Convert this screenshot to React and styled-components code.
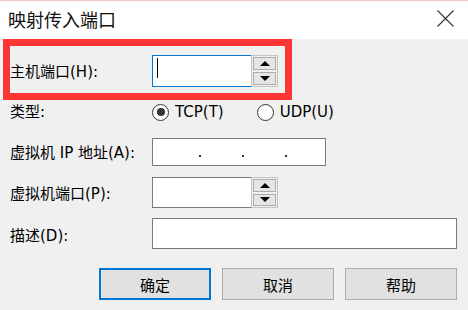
import React from 'react';
import styled, { createGlobalStyle } from 'styled-components';

const GlobalStyle = createGlobalStyle`
  html, body {
    margin: 0;
    padding: 0;
    background: #f0f0f0;
  }
  body {
    font-family: "DejaVu Sans", "Noto Sans CJK SC", sans-serif;
    color: #000;
  }
`;

const Window = styled.div`
  width: 468px;
  height: 310px;
  background: #f0f0f0;
  overflow: hidden;
  display: flex;
  flex-direction: column;
`;

const TitleBar = styled.div`
  height: 39px;
  box-sizing: border-box;
  background: #fff;
  border-top: 1px solid #f4c6c6;
  display: flex;
  align-items: center;
  justify-content: space-between;
  padding: 0 14px 2px 8px;
  font-size: 18px;
  color: #111;
`;

const CloseIcon = styled.svg`
  width: 17px;
  height: 17px;
  margin-top: -1px;
`;

// red annotation frame around the first row
const Highlight = styled.div`
  width: 289px;
  height: 61px;
  box-sizing: border-box;
  margin-left: 3px;
  border: 7px solid #fc3535;
  padding-top: 9px;
`;

const Row = styled.div`
  display: grid;
  grid-template-columns: ${p => p.$labelWidth || 142}px auto;
  align-items: center;
  padding-left: ${p => p.$indent ?? 10}px;
  margin-top: ${p => p.$top || 0}px;
  height: ${p => p.$height || 31}px;
`;

const Label = styled.span`
  font-size: 15px;
  line-height: 1;
  padding-top: ${p => p.$drop || 3}px;
  white-space: nowrap;
`;

const Spin = styled.div`
  display: flex;
  height: ${p => p.$h}px;
`;

const SpinField = styled.div`
  width: 99px;
  height: 100%;
  box-sizing: border-box;
  background: #fff;
  border: 1px solid ${p => (p.$focus ? '#0078d7' : '#7a7a7a')};
  border-right: none;
  position: relative;
`;

const Caret = styled.span`
  position: absolute;
  left: 4px;
  top: 2px;
  width: 1px;
  height: 20px;
  background: #000;
`;

const SpinButtons = styled.div`
  width: 27px;
  height: 100%;
  box-sizing: border-box;
  border: 1px solid #c4c4c4;
  background: #f0f0f0;
  display: flex;
  flex-direction: column;
  gap: 2px;
  padding: 1px;
`;

const SpinBtn = styled.div`
  flex: 1;
  background: #e5e5e5;
  border: 1px solid #adadad;
  display: flex;
  align-items: center;
  justify-content: center;
`;

const Triangle = styled.span`
  width: 0;
  height: 0;
  border-left: 5px solid transparent;
  border-right: 5px solid transparent;
  ${p => (p.$down ? 'border-top: 5px solid #000;' : 'border-bottom: 5px solid #000;')}
`;

const Radios = styled.div`
  display: flex;
  align-items: center;
`;

const RadioItem = styled.div`
  display: flex;
  align-items: center;
  gap: 6px;
  font-size: 15px;
  margin-right: ${p => p.$gap || 0}px;
`;

const Circle = styled.span`
  width: 17px;
  height: 17px;
  box-sizing: border-box;
  border-radius: 50%;
  border: 1px solid #333;
  background: #fff;
  display: flex;
  align-items: center;
  justify-content: center;
  &::after {
    content: '';
    width: 8px;
    height: 8px;
    border-radius: 50%;
    background: ${p => (p.$checked ? '#333' : 'transparent')};
  }
`;

const TextBox = styled.div`
  width: ${p => p.$w}px;
  height: ${p => p.$h}px;
  box-sizing: border-box;
  background: #fff;
  border: 1px solid #7a7a7a;
`;

const IpBox = styled(TextBox)`
  display: flex;
  align-items: flex-end;
  padding-bottom: 8px;
`;

const IpDot = styled.span`
  width: 2px;
  height: 2px;
  background: #333;
  margin-left: ${p => p.$x}px;
`;

const Buttons = styled.div`
  display: flex;
  gap: 11px;
  padding-left: 99px;
  margin-top: 19px;
`;

const Button = styled.div`
  width: 112px;
  height: 32px;
  box-sizing: border-box;
  background: #e1e1e1;
  border: ${p => (p.$default ? '2px solid #0078d7' : '1px solid #adadad')};
  display: flex;
  align-items: center;
  justify-content: center;
  font-size: 15px;
`;

function SpinInput({ focus, h }) {
  return (
    <Spin $h={h}>
      <SpinField $focus={focus}>{focus && <Caret />}</SpinField>
      <SpinButtons>
        <SpinBtn><Triangle /></SpinBtn>
        <SpinBtn><Triangle $down /></SpinBtn>
      </SpinButtons>
    </Spin>
  );
}

export default function App() {
  return (
    <Window>
      <GlobalStyle />
      <TitleBar>
        <span>映射传入端口</span>
        <CloseIcon viewBox="0 0 17 17">
          <path d="M0.5 0.5 L16.5 16.5 M16.5 0.5 L0.5 16.5" stroke="#333" strokeWidth="1.1" fill="none" />
        </CloseIcon>
      </TitleBar>

      <Highlight>
        <Row $indent={0} $labelWidth={142} $height={32}>
          <Label>主机端口(H):</Label>
          <SpinInput focus h={32} />
        </Row>
      </Highlight>

      <Row $height={24}>
        <Label $drop={1}>类型:</Label>
        <Radios>
          <RadioItem $gap={33}><Circle $checked />TCP(T)</RadioItem>
          <RadioItem><Circle />UDP(U)</RadioItem>
        </Radios>
      </Row>

      <Row $top={14} $height={28}>
        <Label>虚拟机 IP 地址(A):</Label>
        <IpBox $w={174} $h={28}>
          <IpDot $x={46} />
          <IpDot $x={41} />
          <IpDot $x={41} />
        </IpBox>
      </Row>

      <Row $top={11} $height={31}>
        <Label>虚拟机端口(P):</Label>
        <SpinInput h={31} />
      </Row>

      <Row $top={10} $height={31}>
        <Label $drop={6}>描述(D):</Label>
        <TextBox $w={305} $h={31} />
      </Row>

      <Buttons>
        <Button $default>确定</Button>
        <Button>取消</Button>
        <Button>帮助</Button>
      </Buttons>
    </Window>
  );
}
